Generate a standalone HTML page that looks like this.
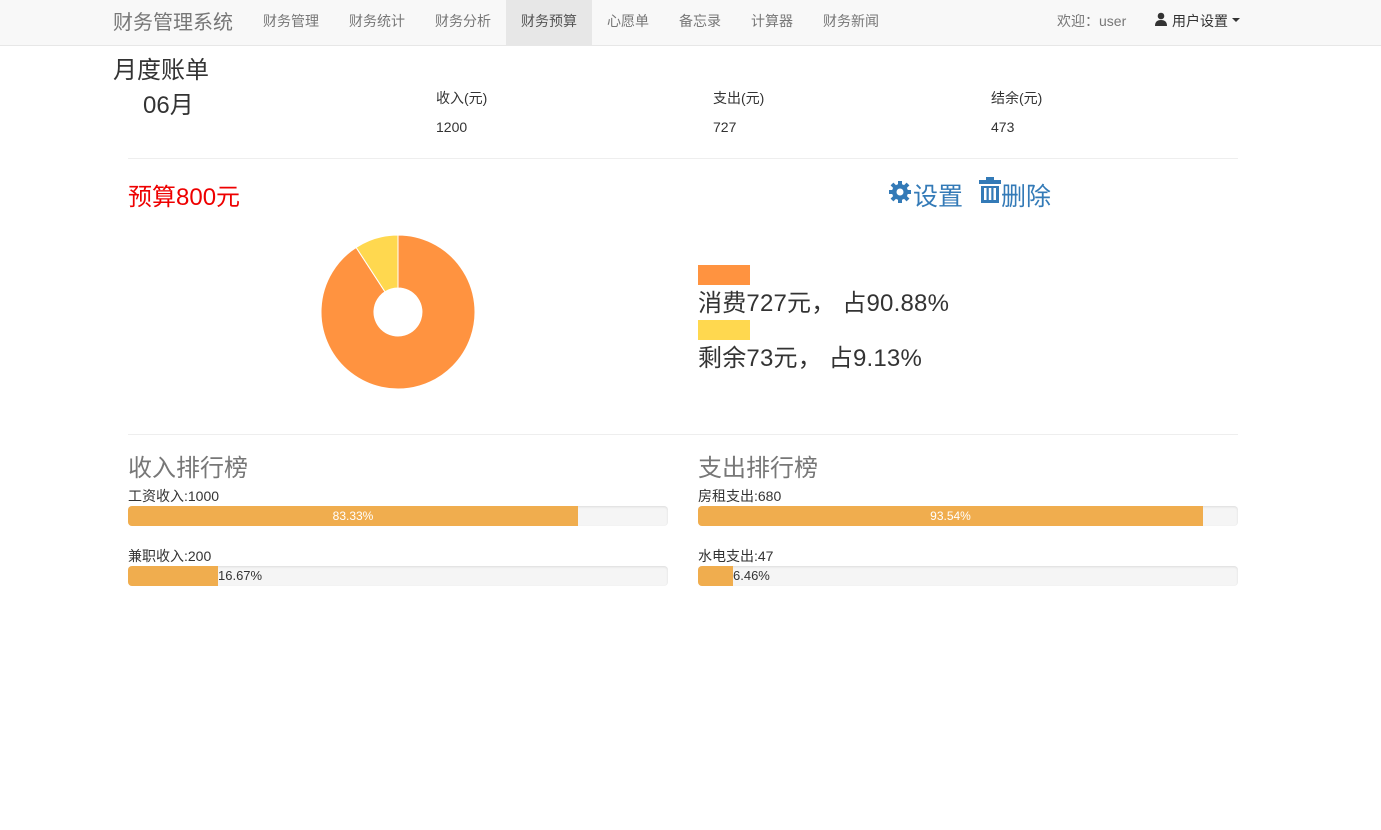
<!DOCTYPE html>
<html><head><meta charset="utf-8"><style>
*{margin:0;padding:0;box-sizing:border-box}
body{width:1381px;height:830px;background:#fff;font-family:"Liberation Sans","Noto Sans CJK SC",sans-serif;color:#333;position:relative;overflow:hidden;font-size:14px}
.a{position:absolute;white-space:nowrap}
.nav{position:absolute;left:0;top:0;width:1381px;height:46px;background:#f8f8f8;border-bottom:1px solid #e7e7e7}
.nav .a{color:#777;font-size:14px;top:11px}
.hr{position:absolute;left:128px;width:1110px;height:1px;background:#eee}
.bar{position:absolute;height:20px;background:#f5f5f5;border-radius:4px;box-shadow:inset 0 1px 2px rgba(0,0,0,.1);overflow:hidden}
.fill{position:absolute;left:0;top:0;height:20px;background:#f0ad4e;color:#fff;font-size:12px;line-height:20px;text-align:center}
.lbl{font-size:14px;color:#333}
</style></head><body>
<div class="nav">
<div class="a" style="left:113px;top:6px;font-size:20px;color:#777">财务管理系统</div>
<div class="a" style="left:263px">财务管理</div>
<div class="a" style="left:349px">财务统计</div>
<div class="a" style="left:435px">财务分析</div>
<div style="position:absolute;left:506px;top:0;width:86px;height:45px;background:#e7e7e7"></div>
<div class="a" style="left:521px;color:#555">财务预算</div>
<div class="a" style="left:607px">心愿单</div>
<div class="a" style="left:679px">备忘录</div>
<div class="a" style="left:751px">计算器</div>
<div class="a" style="left:823px">财务新闻</div>
<div class="a" style="left:1057px">欢迎：user</div>
<svg class="a" style="left:1154px;top:12px" width="14" height="14" viewBox="0 0 14 14"><circle cx="7" cy="4" r="3.3" fill="#333"/><path d="M1 14 Q1 8 7 8 Q13 8 13 14Z" fill="#333"/></svg>
<div class="a" style="left:1172px;color:#333">用户设置</div>
<svg class="a" style="left:1232px;top:18px" width="8" height="5"><path d="M0 0H8L4 4Z" fill="#333"/></svg>
</div>
<div class="a" style="left:113px;top:56px;font-size:24px;line-height:30px">月度账单</div>
<div class="a" style="left:143px;top:91px;font-size:24px;line-height:30px">06月</div>
<div class="a" style="left:436px;top:88px">收入(元)</div>
<div class="a" style="left:436px;top:119px">1200</div>
<div class="a" style="left:713px;top:88px">支出(元)</div>
<div class="a" style="left:713px;top:119px">727</div>
<div class="a" style="left:991px;top:88px">结余(元)</div>
<div class="a" style="left:991px;top:119px">473</div>
<div class="hr" style="top:158px"></div>
<div class="a" style="left:128px;top:183px;font-size:24px;line-height:30px;color:#e00">预算800元</div>
<svg class="a" style="left:888px;top:180px" width="24" height="24" viewBox="0 0 24 24"><g fill="#337ab7"><circle cx="12" cy="12" r="8"/><g stroke="#337ab7" stroke-width="4"><line x1="12" y1="1" x2="12" y2="23"/><line x1="1" y1="12" x2="23" y2="12"/><line x1="4" y1="4" x2="20" y2="20"/><line x1="20" y1="4" x2="4" y2="20"/></g></g><circle cx="12" cy="12" r="3.5" fill="#fff"/></svg>
<div class="a" style="left:913px;top:182px;font-size:25px;line-height:30px;color:#337ab7">设置</div>
<svg class="a" style="left:979px;top:177px" width="22" height="27" viewBox="0 0 22 27"><g fill="#337ab7"><rect x="7" y="0" width="8" height="3"/><rect x="0" y="3" width="22" height="4"/><path d="M2 9H20V26H2Z"/></g><g fill="#fff"><rect x="5" y="11" width="2.5" height="12"/><rect x="9.8" y="11" width="2.5" height="12"/><rect x="14.5" y="11" width="2.5" height="12"/></g></svg>
<div class="a" style="left:1001px;top:182px;font-size:25px;line-height:30px;color:#337ab7">删除</div>
<svg class="a" style="left:320px;top:234px" width="156" height="156" viewBox="0 0 156 156">
<path d="M78 1 A77 77 0 1 1 36.1 13.4 L65 57.8 A24 24 0 1 0 78 54Z" fill="#ff9340" stroke="#fff" stroke-width="1"/>
<path d="M78 1 A77 77 0 0 0 36.1 13.4 L65 57.8 A24 24 0 0 1 78 54Z" fill="#ffd84f" stroke="#fff" stroke-width="1"/>
</svg>
<div style="position:absolute;left:698px;top:265px;width:52px;height:20px;background:#ff9340"></div>
<div class="a" style="left:698px;top:289px;font-size:24px;line-height:30px;letter-spacing:0.2px">消费727元， 占90.88%</div>
<div style="position:absolute;left:698px;top:320px;width:52px;height:20px;background:#ffd84f"></div>
<div class="a" style="left:698px;top:344px;font-size:24px;line-height:30px;letter-spacing:0.2px">剩余73元， 占9.13%</div>
<div class="hr" style="top:434px"></div>
<div class="a" style="left:128px;top:454px;font-size:24px;line-height:30px;color:#777">收入排行榜</div>
<div class="a lbl" style="left:128px;top:488px;line-height:17px">工资收入:1000</div>
<div class="bar" style="left:128px;top:506px;width:540px"><div class="fill" style="width:450px">83.33%</div></div>
<div class="a lbl" style="left:128px;top:548px;line-height:17px">兼职收入:200</div>
<div class="bar" style="left:128px;top:566px;width:540px"><div class="fill" style="width:90px"></div><span class="a" style="left:90px;top:2px;font-size:13px;color:#333">16.67%</span></div>
<div class="a" style="left:698px;top:454px;font-size:24px;line-height:30px;color:#777">支出排行榜</div>
<div class="a lbl" style="left:698px;top:488px;line-height:17px">房租支出:680</div>
<div class="bar" style="left:698px;top:506px;width:540px"><div class="fill" style="width:505px">93.54%</div></div>
<div class="a lbl" style="left:698px;top:548px;line-height:17px">水电支出:47</div>
<div class="bar" style="left:698px;top:566px;width:540px"><div class="fill" style="width:35px"></div><span class="a" style="left:35px;top:2px;font-size:13px;color:#333">6.46%</span></div>
</body></html>
